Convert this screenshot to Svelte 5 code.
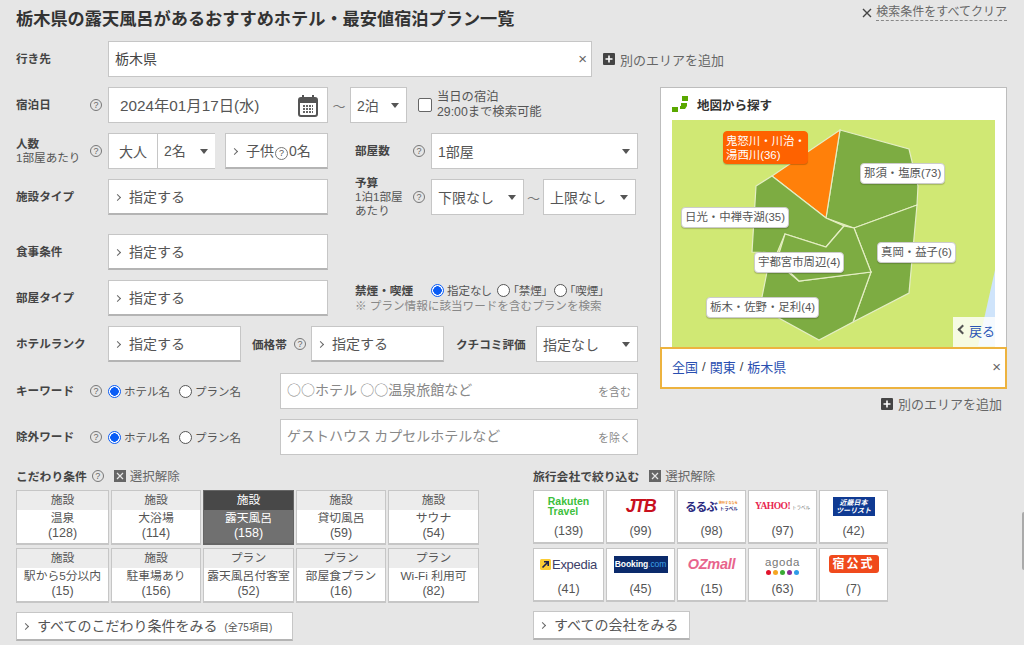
<script>
  const tips = [
    { head: '施設', name: '温泉', count: 128 },
    { head: '施設', name: '大浴場', count: 114 },
    { head: '施設', name: '露天風呂', count: 158, on: true },
    { head: '施設', name: '貸切風呂', count: 59 },
    { head: '施設', name: 'サウナ', count: 54 },
    { head: '施設', name: '駅から5分以内', count: 15 },
    { head: '施設', name: '駐車場あり', count: 156 },
    { head: 'プラン', name: '露天風呂付客室', count: 52 },
    { head: 'プラン', name: '部屋食プラン', count: 16 },
    { head: 'プラン', name: 'Wi-Fi 利用可', count: 82 }
  ];

  const agencies = [
    { id: 'rakuten', count: 139 },
    { id: 'jtb', count: 99 },
    { id: 'rurubu', count: 98 },
    { id: 'yahoo', count: 97 },
    { id: 'knt', count: 42 },
    { id: 'expedia', count: 41 },
    { id: 'booking', count: 45 },
    { id: 'ozmall', count: 15 },
    { id: 'agoda', count: 63 },
    { id: 'official', count: 7 }
  ];

  const dots = ['#e2132b', '#f5a623', '#3aa935', '#8e2a96', '#2f9be8'];

  const areas = [
    { pts: '168,10 237,29 246,66 245,85 182,108 154,98', fill: '#7dac42' },
    { pts: '168,10 154,98 100,56', fill: '#ff800a' },
    { pts: '100,56 154,98 172,106 154,127 113,114 105,133 80,132 84,66', fill: '#7dac42' },
    { pts: '245,85 182,108 199,152 181,202 237,173', fill: '#7dac42' },
    { pts: '199,152 127,161 116,152 95,152 90,177 105,197 147,220 181,202', fill: '#7dac42' },
    { pts: '113,114 154,127 172,106 182,108 199,152 127,161 105,140', fill: '#7dac42' }
  ];

  const pins = [
    { name: '那須・塩原(73)', cls: 'nasu' },
    { name: '日光・中禅寺湖(35)', cls: 'nikko' },
    { name: '宇都宮市周辺(4)', cls: 'utsu' },
    { name: '真岡・益子(6)', cls: 'moka' },
    { name: '栃木・佐野・足利(4)', cls: 'tochigi' }
  ];
</script>

{#snippet help()}
  <span class="help">?</span>
{/snippet}

{#snippet addArea()}
  <a class="add" href="#add">
    <svg width="12" height="12" viewBox="0 0 12 12"><rect width="12" height="12" rx="1" fill="#444" /><path d="M6 2.5v7M2.5 6h7" stroke="#fff" stroke-width="1.6" /></svg>
    別のエリアを追加
  </a>
{/snippet}

{#snippet uncheck()}
  <a class="uncheck" href="#clear">
    <svg width="12" height="12" viewBox="0 0 12 12"><rect width="12" height="12" fill="#666" /><path d="M3 3l6 6M9 3l-6 6" stroke="#e6e6e6" stroke-width="1.2" /></svg>
    選択解除
  </a>
{/snippet}

{#snippet pick(w)}
  <button class="pick" style="width: {w}px" type="button"><i></i>指定する</button>
{/snippet}

{#snippet radios(name)}
  <label class="radio"><input type="radio" {name} checked />ホテル名</label>
  <label class="radio gap"><input type="radio" {name} />プラン名</label>
{/snippet}

<div class="page">
  <header class="title-row">
    <h1>栃木県の露天風呂があるおすすめホテル・最安値宿泊プラン一覧</h1>
    <a class="clear" href="#clear">
      <svg width="10" height="10" viewBox="0 0 10 10"><path d="M1 1l8 8M9 1l-8 8" stroke="#444" stroke-width="1.4" /></svg>
      <span class="dash">検索条件をすべてクリア</span>
    </a>
  </header>

  <div class="row first">
    <div class="lab"><b>行き先</b></div>
    <div class="place">栃木県<span class="close">×</span></div>
    {@render addArea()}
  </div>

  <div class="columns">
    <div class="form">
      <div class="row">
        <div class="lab"><b>宿泊日</b>{@render help()}</div>
        <div class="date">
          <span>2024年01月17日(水)</span>
          <svg width="20" height="23" viewBox="0 0 20 23">
            <rect x="1" y="4" width="18" height="18" rx="2" fill="#fff" stroke="#555" stroke-width="2" />
            <rect x="1" y="4" width="18" height="5" fill="#555" />
            <path d="M5 1v5M15 1v5" stroke="#555" stroke-width="2" />
            <path d="M5 12h10M5 15h10M5 18h10" stroke="#666" stroke-width="2" stroke-dasharray="2 1" />
          </svg>
        </div>
        <span class="tilde">〜</span>
        <div class="sel" style="width: 57px">2泊</div>
        <label class="same-day">
          <input type="checkbox" />
          <span>当日の宿泊<br />29:00まで検索可能</span>
        </label>
      </div>

      <div class="row">
        <div class="lab"><b>人数<small>1部屋あたり</small></b>{@render help()}</div>
        <div class="people">
          <span>大人</span>
          <div class="sel bare">2名</div>
        </div>
        <button class="pick child" type="button"><i></i>子供<span class="mini-help">?</span>0名</button>
        <div class="lab side"><b>部屋数</b>{@render help()}</div>
        <div class="sel" style="width: 207px">1部屋</div>
      </div>

      <div class="row">
        <div class="lab"><b>施設タイプ</b></div>
        {@render pick(220)}
        <div class="lab side"><b>予算<small>1泊1部屋<br />あたり</small></b>{@render help()}</div>
        <div class="sel" style="width: 93px">下限なし</div>
        <span class="tilde budget">〜</span>
        <div class="sel" style="width: 93px">上限なし</div>
      </div>

      <div class="row meal">
        <div class="lab"><b>食事条件</b></div>
        {@render pick(220)}
      </div>

      <div class="row">
        <div class="lab"><b>部屋タイプ</b></div>
        {@render pick(220)}
        <div class="smoke">
          <div class="smoke-line">
            <b>禁煙・喫煙</b>
            <label class="radio"><input type="radio" name="smoke" checked />指定なし</label>
            <label class="radio"><input type="radio" name="smoke" />「禁煙」</label>
            <label class="radio"><input type="radio" name="smoke" />「喫煙」</label>
          </div>
          <p>※ プラン情報に該当ワードを含むプランを検索</p>
        </div>
      </div>

      <div class="row rank">
        <div class="lab"><b>ホテルランク</b></div>
        {@render pick(133)}
        <div class="price"><b>価格帯</b>{@render help()}</div>
        {@render pick(133)}
        <b class="review">クチコミ評価</b>
        <div class="sel" style="width: 102px">指定なし</div>
      </div>

      <div class="row">
        <div class="lab"><b>キーワード</b>{@render help()}</div>
        {@render radios('kw')}
        <div class="word"><input placeholder="○○ホテル ○○温泉旅館など" /><span>を含む</span></div>
      </div>

      <div class="row">
        <div class="lab"><b>除外ワード</b>{@render help()}</div>
        {@render radios('ex')}
        <div class="word"><input placeholder="ゲストハウス カプセルホテルなど" /><span>を除く</span></div>
      </div>
    </div>

    <aside class="map-col">
      <div class="map-card">
        <h2>
          <svg width="16" height="16" viewBox="0 0 16 16" fill="#5aa800">
            <rect x="10" y="0" width="6" height="5" />
            <path d="M9 7h6v3l-2 3H8v-3h1z" />
            <rect x="0" y="11" width="6" height="5" />
          </svg>
          地図から探す
        </h2>
        <div class="map">
          <svg width="323" height="226" viewBox="0 0 323 226">
            <polygon points="323,150 323,226 306,226" fill="#cfe4fb" />
            {#each areas as area}
              <polygon points={area.pts} fill={area.fill} stroke="#e4eec4" stroke-width="1.2" />
            {/each}
          </svg>
          <div class="pin hot">鬼怒川・川治・<br />湯西川(36)</div>
          {#each pins as pin}
            <div class="pin {pin.cls}">{pin.name}</div>
          {/each}
          <a class="back" href="#back"><i></i>戻る</a>
        </div>
      </div>
      <div class="crumbs">
        <a href="#a">全国</a> / <a href="#b">関東</a> / <a href="#c">栃木県</a>
        <span class="close">×</span>
      </div>
      <div class="add-row">{@render addArea()}</div>
    </aside>
  </div>

  <div class="bottom">
    <section class="tips">
      <div class="sec-head"><b>こだわり条件</b>{@render help()}{@render uncheck()}</div>
      <div class="tip-grid">
        {#each tips as tip}
          <div class="tip" class:on={tip.on}>
            <div class="tip-head">{tip.head}</div>
            <div class="tip-body">{tip.name}<br /><span class="num">({tip.count})</span></div>
          </div>
        {/each}
      </div>
      <button class="more wide" type="button"><i></i>すべてのこだわり条件をみる<small>(全75項目)</small></button>
    </section>

    <section class="agents">
      <div class="sec-head"><b>旅行会社で絞り込む</b>{@render uncheck()}</div>
      <div class="agent-grid">
        {#each agencies as a}
          <div class="agent">
            <div class="logo">
              {#if a.id === 'rakuten'}
                <span class="l-rakuten">Rakuten<br />Travel</span>
              {:else if a.id === 'jtb'}
                <span class="l-jtb">JTB</span>
              {:else if a.id === 'rurubu'}
                <span class="l-rurubu">るるぶ<span class="rb-side"><em>旅行するなら</em><u>トラベル</u></span></span>
              {:else if a.id === 'yahoo'}
                <span class="l-yahoo">YAHOO!<u>トラベル</u></span>
              {:else if a.id === 'knt'}
                <span class="l-knt">近畿日本<br />ツーリスト</span>
              {:else if a.id === 'expedia'}
                <span class="l-expedia">
                  <svg width="11" height="11" viewBox="0 0 11 11"><rect width="11" height="11" rx="1.5" fill="#fbcc33" /><path d="M2.5 8.5L8 3M4 2.8h4.2V7" fill="none" stroke="#1a2050" stroke-width="1.6" /></svg>
                  Expedia
                </span>
              {:else if a.id === 'booking'}
                <span class="l-booking">Booking<em>.com</em></span>
              {:else if a.id === 'ozmall'}
                <span class="l-oz">OZmall</span>
              {:else if a.id === 'agoda'}
                <span class="l-agoda">agoda<span class="dots">{#each dots as d}<i style="background: {d}"></i>{/each}</span></span>
              {:else}
                <span class="l-official">宿公式</span>
              {/if}
            </div>
            <div class="num">({a.count})</div>
          </div>
        {/each}
      </div>
      <button class="more firms" type="button"><i></i>すべての会社をみる</button>
    </section>
  </div>

  <div class="scroll-thumb"></div>
</div>

<style>
  :global(body) {
    margin: 0;
    background: #e6e6e6;
  }

  .page {
    position: relative;
    width: 1024px;
    height: 645px;
    overflow: hidden;
    box-sizing: border-box;
    padding: 0 17px 0 16px;
    background: #e6e6e6;
    color: #555;
    font-family: "Liberation Sans", "Noto Sans CJK JP", sans-serif;
    font-size: 14px;
  }

  .page * {
    box-sizing: border-box;
  }

  a {
    color: inherit;
    text-decoration: none;
  }

  b {
    color: #444;
    font-weight: 700;
  }

  .title-row {
    display: flex;
    justify-content: space-between;
    height: 41px;
    padding-top: 7px;
  }

  h1 {
    margin: 0;
    color: #333;
    font-size: 17.2px;
    line-height: 25px;
    font-weight: 700;
    white-space: nowrap;
  }

  .clear {
    display: flex;
    align-items: center;
    gap: 4px;
    height: 15px;
    margin-top: -2px;
    font-size: 12px;
    color: #666;
  }

  .dash {
    border-bottom: 1px dashed #888;
    line-height: 15px;
  }

  .row {
    display: flex;
    align-items: center;
    height: 36px;
    margin-bottom: 10px;
  }

  .meal {
    margin-top: 19px;
  }

  .rank {
    margin-bottom: 11px;
  }

  .lab {
    display: flex;
    align-items: center;
    justify-content: space-between;
    flex: none;
    width: 92px;
    padding-right: 6px;
    font-size: 11.6px;
    line-height: 14px;
  }

  .lab small {
    display: block;
    font-size: 11.6px;
    font-weight: 400;
    color: #555;
  }

  .lab.side {
    width: 76px;
    margin-left: 27px;
  }

  .help {
    display: inline-block;
    flex: none;
    width: 12px;
    height: 12px;
    border: 1px solid #777;
    border-radius: 50%;
    color: #666;
    font-size: 9px;
    line-height: 10px;
    text-align: center;
    font-weight: 400;
  }

  .place {
    display: flex;
    align-items: center;
    justify-content: space-between;
    width: 484px;
    height: 36px;
    padding: 0 4px 2px 6px;
    background: #fff;
    border: 1px solid #c6c6c6;
    color: #444;
  }

  .close {
    color: #666;
    font-size: 15px;
  }

  .add {
    display: inline-flex;
    align-items: center;
    gap: 5px;
    margin-left: 11px;
    color: #666;
    font-size: 13px;
    white-space: nowrap;
  }

  .columns {
    display: flex;
    gap: 20px;
  }

  .form {
    flex: none;
    width: 624px;
  }

  .date {
    display: flex;
    align-items: center;
    justify-content: space-between;
    width: 220px;
    height: 36px;
    padding: 0 9px 0 11px;
    background: #fff;
    border: 1px solid #c6c6c6;
    font-size: 15.3px;
  }

  .date span {
    margin-top: -3px;
  }

  .tilde {
    flex: none;
    width: 22px;
    text-align: center;
    font-size: 13px;
    color: #777;
  }

  .tilde.budget {
    width: 19px;
  }

  .sel {
    position: relative;
    flex: none;
    height: 36px;
    padding-left: 6px;
    background: #fff;
    border: 1px solid #c6c6c6;
    line-height: 36px;
    white-space: nowrap;
  }

  .sel::after {
    content: "";
    position: absolute;
    top: 15px;
    right: 7px;
    border: 4px solid transparent;
    border-top: 5px solid #555;
    border-bottom: 0;
  }

  .sel.bare {
    width: 58px;
    height: 34px;
    border: 0;
    border-left: 1px solid #c6c6c6;
    line-height: 34px;
  }

  .same-day {
    display: flex;
    align-items: center;
    gap: 5px;
    margin-left: 11px;
    font-size: 12.3px;
    line-height: 15px;
    white-space: nowrap;
  }

  .same-day input {
    appearance: none;
    width: 14px;
    height: 14px;
    margin: 0;
    background: #fff;
    border: 1px solid #666;
    border-radius: 2px;
  }

  .people {
    display: flex;
    flex: none;
    align-items: center;
    width: 107px;
    height: 36px;
    background: #fff;
    border: 1px solid #c6c6c6;
  }

  .people > span {
    flex: none;
    width: 48px;
    text-align: center;
  }

  .pick,
  .more {
    flex: none;
    height: 36px;
    padding: 0 0 2px;
    background: #fff;
    border: 1px solid #c6c6c6;
    border-bottom: 2px solid #b4b4b4;
    color: #555;
    font: inherit;
    text-align: left;
    white-space: nowrap;
  }

  .pick i,
  .more i {
    display: inline-block;
    width: 5px;
    height: 5px;
    margin: 0 9px 2px 6px;
    border-top: 1px solid #666;
    border-right: 1px solid #666;
    transform: rotate(45deg);
  }

  .pick.child {
    width: 103px;
    margin-left: 10px;
  }

  .mini-help {
    display: inline-block;
    width: 13px;
    height: 13px;
    margin: 0 1px;
    border: 1px solid #777;
    border-radius: 50%;
    font-size: 9px;
    line-height: 11px;
    text-align: center;
  }

  .smoke {
    margin-left: 27px;
    font-size: 11.6px;
  }

  .smoke-line {
    display: flex;
    align-items: center;
    height: 16px;
  }

  .smoke-line b {
    width: 76px;
  }

  .smoke-line .radio {
    margin-right: 6px;
    font-feature-settings: "palt";
  }

  .smoke p {
    margin: 0;
    color: #888;
    line-height: 16px;
    white-space: nowrap;
  }

  .radio {
    display: inline-flex;
    align-items: center;
    flex: none;
    gap: 3px;
    font-size: 11.5px;
    white-space: nowrap;
  }

  .radio.gap {
    margin-left: 9px;
  }

  .radio input {
    appearance: none;
    width: 13px;
    height: 13px;
    margin: 0;
    background: #fff;
    border: 1px solid #555;
    border-radius: 50%;
  }

  .radio input:checked {
    background: radial-gradient(circle, #0a5cf5 0 4px, #fff 4.5px);
    border-color: #0a5cf5;
  }

  .price {
    display: flex;
    align-items: center;
    justify-content: space-between;
    flex: none;
    width: 70px;
    padding: 0 5px 0 11px;
    font-size: 11.6px;
  }

  .review {
    flex: none;
    width: 80px;
    margin-left: 12px;
    font-size: 11.6px;
    white-space: nowrap;
  }

  .word {
    display: flex;
    align-items: center;
    flex: none;
    width: 358px;
    height: 36px;
    margin-left: 39px;
    padding: 0 6px;
    background: #fff;
    border: 1px solid #c6c6c6;
  }

  .word input {
    flex: 1;
    min-width: 0;
    margin-top: -4px;
    padding: 0;
    border: 0;
    outline: 0;
    font-family: "Noto Sans CJK JP", sans-serif;
    font-size: 14px;
  }

  .word input::placeholder {
    color: #888;
    opacity: 1;
  }

  .word span {
    color: #888;
    font-size: 11px;
    white-space: nowrap;
  }

  .map-col {
    flex: none;
    width: 347px;
  }

  .map-card {
    padding: 0 11px;
    background: #fff;
    border: 1px solid #bdbdbd;
    border-bottom: 0;
  }

  h2 {
    display: flex;
    align-items: center;
    gap: 9px;
    height: 32px;
    margin: 0;
    color: #333;
    font-size: 12.5px;
  }

  .map {
    position: relative;
    width: 323px;
    height: 227px;
    background: #d0e874;
    overflow: hidden;
  }

  .map svg {
    display: block;
  }

  .pin {
    position: absolute;
    height: 21px;
    padding: 0 3px;
    background: #fff;
    border: 1px solid #ccc;
    border-radius: 4px;
    box-shadow: 0 1px 1px rgba(0, 0, 0, 0.2);
    font-size: 11.4px;
    line-height: 19px;
    white-space: nowrap;
    text-align: center;
  }

  .pin.hot {
    left: 51px;
    top: 11px;
    width: 85px;
    height: 33px;
    padding: 0 2px;
    background: #fe6200;
    border-color: #fe6200;
    color: #fff;
    line-height: 14px;
    text-align: left;
    padding-top: 2px;
  }

  .pin.nasu { left: 188px; top: 43px; }
  .pin.nikko { left: 9px; top: 87px; }
  .pin.utsu { left: 82px; top: 132px; }
  .pin.moka { left: 205px; top: 122px; }
  .pin.tochigi { left: 34px; top: 177px; }

  .back {
    position: absolute;
    right: 0;
    bottom: 0;
    width: 42px;
    height: 30px;
    background: rgba(255, 255, 255, 0.8);
    color: #2a55b5;
    font-size: 13px;
    line-height: 30px;
    white-space: nowrap;
  }

  .back i {
    display: inline-block;
    width: 7px;
    height: 7px;
    margin: 0 3px 3px 6px;
    border-top: 2px solid #555;
    border-left: 2px solid #555;
    transform: rotate(-45deg);
  }

  .crumbs {
    display: flex;
    align-items: center;
    gap: 4px;
    height: 42px;
    padding: 0 4px 3px 10px;
    background: #fff;
    border: 2px solid #edb33f;
    color: #444;
    font-size: 13px;
  }

  .crumbs a {
    color: #2a4fb0;
  }

  .crumbs .close {
    margin-left: auto;
  }

  .add-row {
    display: flex;
    justify-content: flex-end;
    padding: 5px 5px 0 0;
  }

  .bottom {
    display: flex;
    gap: 54px;
    margin-top: 3px;
  }

  .tips {
    flex: none;
    width: 463px;
  }

  .sec-head {
    display: flex;
    align-items: center;
    gap: 5px;
    height: 15px;
    margin-bottom: 7px;
    font-size: 11.8px;
  }

  .uncheck {
    display: inline-flex;
    align-items: center;
    gap: 4px;
    margin-left: 5px;
    color: #666;
    font-size: 12.5px;
  }

  .tip-grid,
  .agent-grid {
    display: grid;
    gap: 3px 2px;
  }

  .tip-grid {
    grid-template-columns: 93px 90px 91px 90px 91px;
  }

  .tip {
    height: 55px;
    background: #fff;
    border: 1px solid #c6c6c6;
    border-bottom-width: 2px;
    font-size: 11.8px;
    text-align: center;
    white-space: nowrap;
  }

  .tip-head {
    height: 19px;
    background: #ececec;
    line-height: 18px;
  }

  .tip-body {
    padding-top: 1px;
    line-height: 15px;
  }

  .num {
    font-size: 12.5px;
  }

  .tip.on {
    background: #707070;
    border-color: #666;
    color: #fff;
  }

  .tip.on .tip-head {
    background: #484848;
  }

  .more {
    display: block;
    height: 29px;
    margin-top: 9px;
    font-size: 14px;
  }

  .more.wide {
    width: 277px;
  }

  .more.firms {
    width: 157px;
  }

  .more small {
    margin-left: 7px;
    font-size: 10px;
  }

  .agents {
    flex: none;
  }

  .agent-grid {
    grid-template-columns: 71px 69px 69px 69px 69px;
    gap: 4px 2px;
  }

  .agent {
    display: flex;
    flex-direction: column;
    align-items: center;
    height: 54px;
    background: #fff;
    border: 1px solid #c6c6c6;
    border-bottom-width: 2px;
  }

  .logo {
    display: flex;
    align-items: center;
    justify-content: center;
    height: 30px;
    white-space: nowrap;
  }

  .agent .num {
    margin-top: 2px;
    line-height: 16px;
  }

  .l-rakuten {
    color: #3dbf3d;
    font-size: 10.5px;
    font-weight: 700;
    line-height: 10px;
  }

  .l-jtb {
    color: #c8101e;
    font-size: 18px;
    font-style: italic;
    font-weight: 700;
    letter-spacing: -1.5px;
  }

  .l-rurubu {
    display: flex;
    align-items: center;
    color: #2a2a80;
    font-size: 11.5px;
    font-weight: 700;
    letter-spacing: -1px;
  }

  .rb-side {
    display: flex;
    flex-direction: column;
    align-items: flex-end;
    margin-left: 2px;
    font-size: 4.5px;
    line-height: 6px;
    letter-spacing: 0;
  }

  .rb-side em {
    color: #f08c28;
    font-size: 3.2px;
    font-style: normal;
  }

  .rb-side u {
    text-decoration: none;
  }

  .l-yahoo {
    color: #e8264e;
    font-family: "Liberation Serif", serif;
    font-size: 9.5px;
    font-weight: 700;
    letter-spacing: -0.5px;
  }

  .l-yahoo u {
    margin-left: 2px;
    color: #666;
    font-family: "Noto Sans CJK JP", sans-serif;
    font-size: 4.5px;
    font-weight: 400;
    letter-spacing: 0;
    text-decoration: none;
  }

  .l-knt {
    width: 42px;
    height: 19px;
    padding-top: 2px;
    background: #0f3a92;
    color: #fff;
    font-size: 7px;
    font-style: italic;
    font-weight: 700;
    line-height: 8px;
    text-align: center;
  }

  .l-expedia {
    display: flex;
    align-items: center;
    gap: 1px;
    color: #3d4068;
    font-size: 13px;
    letter-spacing: -0.3px;
  }

  .l-booking {
    width: 54px;
    height: 17px;
    background: #0b2a6b;
    color: #fff;
    font-size: 8.5px;
    font-weight: 700;
    line-height: 17px;
    text-align: center;
    letter-spacing: -0.1px;
  }

  .l-booking em {
    color: #3ba0e8;
    font-style: normal;
    font-weight: 400;
  }

  .l-oz {
    color: #e8648c;
    font-size: 14.5px;
    font-style: italic;
    font-weight: 700;
    letter-spacing: -0.3px;
  }

  .l-agoda {
    display: flex;
    flex-direction: column;
    align-items: center;
    margin-top: 4px;
    color: #777;
    font-size: 11.5px;
    line-height: 11px;
    letter-spacing: 0.6px;
  }

  .dots {
    display: flex;
    gap: 2px;
    margin-top: 2px;
  }

  .dots i {
    width: 5px;
    height: 5px;
    border-radius: 50%;
  }

  .l-official {
    width: 50px;
    height: 18px;
    background: #f04a1c;
    border-radius: 3px;
    color: #fff;
    font-size: 12px;
    font-weight: 700;
    line-height: 18px;
    letter-spacing: 2px;
    text-align: center;
  }

  .scroll-thumb {
    position: absolute;
    right: 0;
    top: 512px;
    width: 2px;
    height: 58px;
    background: #aaa;
    border-radius: 2px 0 0 2px;
  }
</style>
